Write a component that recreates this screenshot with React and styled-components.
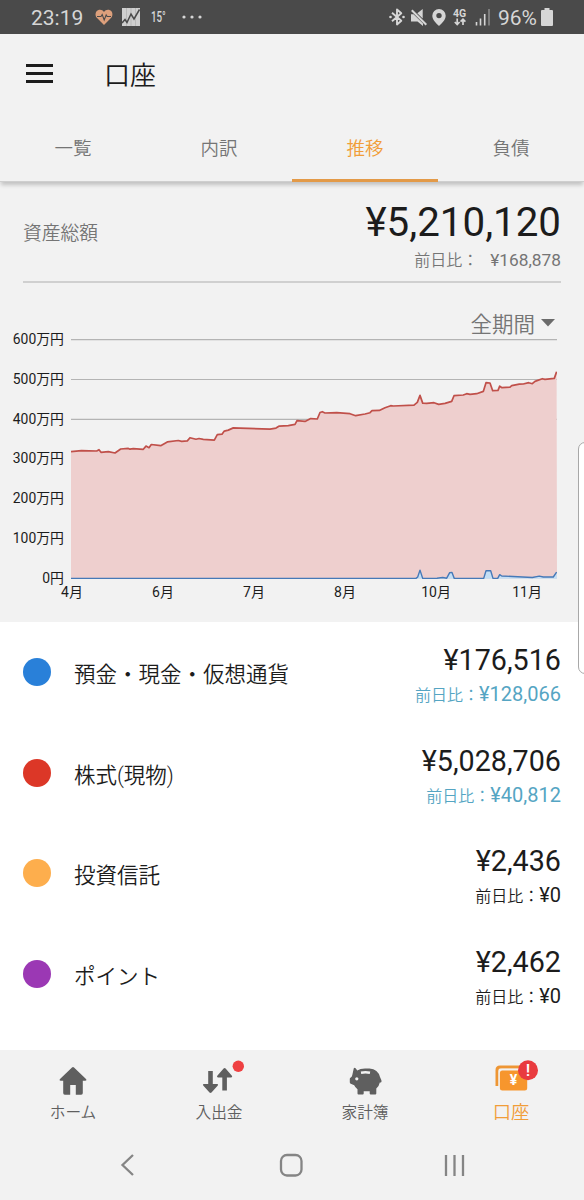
import React from "react";
import styled, { createGlobalStyle } from "styled-components";

const GlobalStyle = createGlobalStyle`
  * {
    box-sizing: border-box;
  }
  body {
    margin: 0;
    background: #f2f2f2;
    color: #1c1c1c;
    font-family: Roboto, "Noto Sans CJK JP", sans-serif;
  }
`;

const Screen = styled.div`
  position: relative;
  display: flex;
  flex-direction: column;
  width: 584px;
  height: 1200px;
  overflow: hidden;
  background: #f2f2f2;
`;

const StatusBar = styled.div`
  display: flex;
  align-items: center;
  justify-content: space-between;
  flex-shrink: 0;
  height: 34px;
  padding: 0 31px;
  background: #4a4a4a;
  color: #d6d6d6;
`;

const StatusGroup = styled.div`
  display: flex;
  align-items: center;
  height: 34px;
`;

const StatusItem = styled.div`
  display: flex;
  margin-left: ${props => props.$gap}px;

  svg {
    display: block;
    overflow: visible;
  }
`;

const StatusText = styled.span`
  font-size: 21px;
  line-height: 34px;
  padding-top: 2px;
`;

const Temperature = styled.span`
  width: 15px;
  margin-left: 11px;
  font-size: 15px;
  font-weight: 500;
  line-height: 34px;
  white-space: nowrap;
  transform: scaleX(0.65);
  transform-origin: left center;
`;

const Header = styled.header`
  display: flex;
  align-items: center;
  flex-shrink: 0;
  height: 80px;
  padding: 0 26px;
`;

const MenuButton = styled.div`
  display: flex;
  flex-direction: column;
  gap: 5px;
  width: 27px;
  margin-top: -1px;

  span {
    height: 3px;
    background: #1c1c1c;
  }
`;

const Title = styled.h1`
  margin: 0 0 0 51px;
  padding-top: 4px;
  font-size: 26px;
  font-weight: 350;
  line-height: 40px;
`;

const Tabs = styled.nav`
  display: grid;
  grid-template-columns: repeat(4, 1fr);
  flex-shrink: 0;
  height: 68px;
  border-bottom: 1px solid #cfcfcf;
  box-shadow: 0 4px 4px -1px rgba(0, 0, 0, 0.2);
`;

const Tab = styled.div`
  height: 68px;
  border-bottom: 3px solid ${props => (props.$active ? "#e39a48" : "transparent")};
  color: ${props => (props.$active ? "#f19d38" : "#757575")};
  font-size: 18.5px;
  font-weight: 350;
  line-height: 70px;
  text-align: center;
`;

const Summary = styled.section`
  display: flex;
  justify-content: space-between;
  flex-shrink: 0;
  height: 101px;
  margin: 0 23px;
  padding-top: 16px;
  border-bottom: 2px solid #d0d0d0;
`;

const SummaryLabel = styled.div`
  color: #757575;
  font-size: 18.8px;
  font-weight: 350;
  line-height: 72px;
`;

const SummaryValues = styled.div`
  display: flex;
  flex-direction: column;
  align-items: flex-end;
`;

const Total = styled.div`
  font-size: 40.3px;
  line-height: 49px;
`;

const DayChange = styled.div`
  display: flex;
  align-items: baseline;
  gap: ${props => props.$gap || 0}px;
  color: ${props => props.$color};
  font-size: 16px;
  font-weight: 350;
  line-height: 26px;

  span {
    font-size: ${props => props.$size}px;
    font-weight: 400;
  }
`;

const ChartSection = styled.section`
  display: flex;
  flex-direction: column;
  flex-shrink: 0;
  height: 339px;
`;

const PeriodSelect = styled.div`
  display: flex;
  align-items: center;
  justify-content: flex-end;
  gap: 6px;
  height: 24px;
  margin-top: 30px;
  padding-right: 29px;
  color: #757575;
  font-size: 21.5px;
  font-weight: 350;
  line-height: 24px;

  svg {
    margin-bottom: 4px;
  }
`;

const ChartBody = styled.div`
  display: flex;
  height: 242px;
`;

const YAxis = styled.div`
  display: flex;
  flex-direction: column;
  width: 71px;
  padding-right: 7px;

  span {
    flex-shrink: 0;
    height: 39.78px;
    font-size: 13.9px;
    line-height: 4px;
    text-align: right;
  }
`;

const Plot = styled.svg`
  display: block;
  width: 486px;
  height: 242px;
`;

const XAxis = styled.div`
  display: flex;
  margin-top: 3px;
  margin-left: 26.5px;

  span {
    width: 91px;
    font-size: 14px;
    line-height: 20px;
    text-align: center;
  }
`;

const AssetList = styled.section`
  flex-shrink: 0;
  height: 428px;
  padding: 0 23px;
  background: #fff;
`;

const AssetRow = styled.div`
  display: flex;
  align-items: flex-start;
  height: 100.6px;
  padding-top: 22px;
`;

const Dot = styled.span`
  width: 28px;
  height: 28px;
  margin: 14px 23px 0 0;
  border-radius: 50%;
  background: ${props => props.$color};
`;

const AssetName = styled.div`
  flex: 1;
  font-size: 21.5px;
  font-weight: 350;
  line-height: 62px;
`;

const AssetValues = styled.div`
  display: flex;
  flex-direction: column;
  align-items: flex-end;
`;

const Amount = styled.div`
  height: 37px;
  font-size: 28.7px;
  line-height: 33px;
`;

const BottomNav = styled.nav`
  display: grid;
  grid-template-columns: repeat(4, 1fr);
  flex-shrink: 0;
  height: 80px;
`;

const NavItem = styled.div`
  display: flex;
  flex-direction: column;
  align-items: center;
  color: ${props => (props.$active ? "#f19d38" : "#5f5f5f")};
  font-size: ${props => (props.$active ? 18.3 : 15.7)}px;
  font-weight: 350;
  line-height: 29px;

  svg {
    display: block;
    margin-top: 10px;
  }
`;

const SystemNav = styled.div`
  display: flex;
  flex-shrink: 0;
  height: 70px;
  padding-top: 22px;
  padding-left: 46px;

  svg {
    display: block;
    width: 163.5px;
    height: 26px;
  }
`;

const EdgeHandle = styled.div`
  position: absolute;
  top: 442px;
  right: -8px;
  width: 14px;
  height: 232px;
  border: 1px solid #a8a8a8;
  border-radius: 8px;
  background: #fff;
`;

const stocks = [
  [0, 112], [10.5, 111], [25.7, 111.3], [28, 110], [30, 112.6], [37.3, 112], [44, 113.3],
  [49.7, 109.3], [57.3, 108.7], [59, 109.5], [62.3, 109], [72.3, 109.6], [75, 106.4],
  [78, 108], [80.3, 104.8], [89.7, 106], [96.3, 102.2], [107.3, 100.8], [110.7, 101.6],
  [116.3, 101.2], [119, 98], [125, 99.6], [128, 98.8], [132.3, 99.6], [143.3, 100.4],
  [146.3, 95], [151, 94.5], [153.3, 91.4], [157.3, 90.4], [162.3, 88.2], [169, 88.4],
  [199, 89.4], [205, 88.4], [208.3, 86.4], [217.3, 86], [224, 84.7], [226, 81],
  [234, 81.7], [239.7, 78.9], [246.3, 79.3], [249, 72.8], [251.3, 72], [254, 73.3],
  [265.7, 73], [279, 74], [284.7, 76], [294, 74.3], [299, 73], [301, 71], [308.3, 70.7],
  [314, 68], [319.7, 66], [322.3, 66.3], [343, 65.4], [346.3, 62.7], [349, 55.7],
  [351.7, 63.4], [355.7, 63.7], [363, 63], [367.7, 64.7], [374, 63.7], [380.7, 61.7],
  [383, 56], [392.3, 55.3], [395.7, 54], [399, 54.7], [405.7, 54], [412.3, 51.7],
  [415, 43], [419, 43.3], [421.7, 51], [427, 50.7], [428.7, 46.4], [431, 48], [439, 47.4],
  [440.7, 46], [448.3, 44.4], [452.3, 44.3], [457.7, 43], [461.3, 44], [464, 41.7],
  [471.3, 39], [474, 39.7], [483.3, 38.7], [485.6, 32]
];

const deposits = [
  [0, 238.7], [345, 238.7], [346.7, 237.3], [349, 230.4], [351.7, 238.7], [366, 238.5],
  [371.7, 237.8], [375.7, 238.5], [378.7, 233], [381, 232.7], [383.3, 238.7],
  [412.7, 238.7], [415, 231], [419.7, 231], [422, 238.7], [426.7, 238.7], [428.7, 235],
  [430.7, 236.3], [461.3, 237.8], [468.3, 236.4], [472.3, 237.3], [482.3, 237.3],
  [485.6, 232.4]
];

const assets = [
  { name: "預金・現金・仮想通貨", color: "#2980d9", amount: "¥176,516", change: "¥128,066", up: true },
  { name: "株式(現物)", color: "#dc3727", amount: "¥5,028,706", change: "¥40,812", up: true },
  { name: "投資信託", color: "#fdae4d", amount: "¥2,436", change: "¥0" },
  { name: "ポイント", color: "#9b38b4", amount: "¥2,462", change: "¥0" }
];

const toLine = points => points.map(p => p.join(",")).join(" ");
const toArea = points => `0,239 ${toLine(points)} 486,239`;

const HeartIcon = () => (
  <svg width="18" height="17" viewBox="0 0 18 17">
    <path d="M9 16 1.8 8.8C-.3 6.500.3 2.400 3 1.200 5.300.1 7.700 1 9 3c1.300-2 3.700-2.900 6-1.800 2.700 1.200 3.300 5.300 1.200 7.600Z" fill="#dda07c" />
    <path d="M2 7.500h4l1.200-2 2 5.500 2-5 1 1.500H16" fill="none" stroke="#4a4a4a" strokeWidth="1.100" />
  </svg>
);

const StocksIcon = () => (
  <svg width="18" height="18" viewBox="0 0 18 18">
    <path d="M0 0h18v18H0Z" fill="#cfcfcf" />
    <path d="M4.500 0v18M9 0v18M13.500 0v18" stroke="#aaa" strokeWidth=".6" />
    <path d="m0 15 3-3.500 2 3L9 6l3 5 5.500-9.500" fill="none" stroke="#4a4a4a" strokeWidth="1.500" />
  </svg>
);

const DotsIcon = () => (
  <svg width="20" height="4" viewBox="0 0 20 4" fill="#d6d6d6">
    <circle cx="2" cy="2" r="1.600" />
    <circle cx="10" cy="2" r="1.600" />
    <circle cx="18" cy="2" r="1.600" />
  </svg>
);

const BluetoothIcon = () => (
  <svg width="16" height="18" viewBox="0 0 16 18">
    <path d="m3 4.800 9.300 8-4.300 3.700v-15L12.300 5.200 3 13.200" fill="none" stroke="#d6d6d6" strokeWidth="1.900" strokeLinejoin="round" />
    <circle cx="1.500" cy="9" r="1.300" fill="#d6d6d6" />
    <circle cx="14.500" cy="9" r="1.300" fill="#d6d6d6" />
  </svg>
);

const MuteIcon = () => (
  <svg width="16" height="17" viewBox="0 0 16 17">
    <path d="M0 5.200h2.500L12 14.500V17L6.500 12.500H0ZM6.300 4.300 11.700 0v9.500Z" fill="#d6d6d6" />
    <path d="m.8 1.200 14.500 14.500" stroke="#d6d6d6" strokeWidth="2" />
  </svg>
);

const LocationIcon = () => (
  <svg width="14" height="17" viewBox="0 0 14 17">
    <path fillRule="evenodd" d="M7 0a6.700 6.700 0 0 1 6.700 6.700C13.700 11 9.500 14.500 7 17 4.500 14.500.3 11 .3 6.700A6.700 6.700 0 0 1 7 0Zm0 3.900a2.700 2.700 0 1 0 0 5.400 2.700 2.700 0 0 0 0-5.400Z" fill="#d6d6d6" />
  </svg>
);

const NetworkIcon = () => (
  <svg width="14" height="18" viewBox="0 0 14 18">
    <text x="0" y="8.500" fontSize="10.500" fontWeight="700" fill="#d6d6d6">4G</text>
    <path d="M4.200 10.500V16M1.800 14l2.400 2.500L6.600 14M10 17v-5.500M7.600 13.700 10 11.200l2.400 2.500" fill="none" stroke="#d6d6d6" strokeWidth="1.700" />
  </svg>
);

const SignalIcon = () => (
  <svg width="16" height="17" viewBox="0 0 16 17">
    <path d="M1.500 13v3.500M5.500 9.500v7M9.700 5v11.500" stroke="#d6d6d6" strokeWidth="1.600" />
    <path d="M14 0v16.500" stroke="#7d7d7d" strokeWidth="2" />
  </svg>
);

const BatteryIcon = () => (
  <svg width="12" height="18" viewBox="0 0 12 18">
    <path d="M3.500 0h5v2H11q1 0 1 1v14q0 1-1 1H1q-1 0-1-1V3q0-1 1-1h2.500Z" fill="#d6d6d6" />
  </svg>
);

const HomeIcon = () => (
  <svg width="60" height="38" viewBox="0 0 60 38">
    <path d="M29 7.500q1-.9 2 0L43 19q1.200 1.600-.8 1.800h-2.400V33q0 1.700-1.600 1.700h-5.400V25h-5.600v9.700h-5.400q-1.600 0-1.600-1.700V20.800h-2.400q-2-.2-.8-1.800Z" fill="#5f5f5f" />
  </svg>
);

const TransferIcon = () => (
  <svg width="60" height="38" viewBox="0 0 60 38">
    <path d="M19.200 11h4.600v13h4.400q1.500.3.600 1.600l-6.300 7q-1 .9-2 0l-6.300-7q-.9-1.300.6-1.600h4.400ZM33.300 30.600h4.600V17.400h4.400q1.500-.3.600-1.600L36.600 8.400q-1-.9-2 0l-6.300 7.400q-.9 1.300.6 1.600h4.400Z" fill="#5f5f5f" />
    <circle cx="49.300" cy="6.300" r="5.700" fill="#ef4042" />
  </svg>
);

const PiggyIcon = () => (
  <svg width="60" height="38" viewBox="0 0 60 38">
    <path d="M18.800 8.200q.8-1 1.800 0l1.700 2.200Q25 8.600 30 8.400h4.500q8.500.6 10.500 8.600l1.400 3.300q.5 1.600-.4 2.200h-1.200q-.9 4.300-3.500 6v5.100q0 1-1 1h-4.600q-1 0-1-1v-2.300h-6v2.300q0 1-1 1h-4.200q-1 0-1-1v-4.300q-2.300-1.700-3.300-4l-3.400-1.500q-1-.6-1-1.600v-3.400q.1-1 1-1.300 1.300-.8 1.500-2.600Z" fill="#5f5f5f" />
    <path d="M26 12.800q4.500-.9 9 0" fill="none" stroke="#f2f2f2" strokeWidth="2.500" />
    <circle cx="21.800" cy="18.800" r="1.600" fill="#f2f2f2" />
  </svg>
);

const WalletIcon = () => (
  <svg width="60" height="38" viewBox="0 0 60 38">
    <path d="M16 26V10q0-3 3-3h24" fill="none" stroke="#ee9634" strokeWidth="3" />
    <rect x="17.500" y="8.700" width="29" height="22" rx="3" fill="#f2f2f2" />
    <rect x="18.900" y="10.400" width="27.300" height="20" rx="2.500" fill="#f7962d" />
    <text x="32.400" y="25" fontSize="14" fontWeight="700" textAnchor="middle" fill="#fff">¥</text>
    <circle cx="47" cy="10.300" r="10" fill="#e93b3f" />
    <text x="47" y="16.200" fontSize="17" fontWeight="500" textAnchor="middle" fill="#fff">!</text>
  </svg>
);

const Chart = () => (
  <Plot viewBox="0 -2.7 486 242">
    {[0, 39.8, 79.6].map(y => (
      <line key={y} x1="0" x2="486" y1={y} y2={y} stroke="#b4b4b4" strokeWidth="1.200" />
    ))}
    <polygon points={toArea(stocks)} fill="#eecfce" />
    <polyline points={toLine(stocks)} fill="none" stroke="#c0504a" strokeWidth="1.700" strokeLinejoin="round" />
    <polygon points={toArea(deposits)} fill="#c5dff5" />
    <polyline points={toLine(deposits)} fill="none" stroke="#4579b8" strokeWidth="1.400" strokeLinejoin="round" />
  </Plot>
);

const App = () => (
  <Screen lang="ja">
    <GlobalStyle />
    <StatusBar>
      <StatusGroup>
        <StatusText>23:19</StatusText>
        <StatusItem $gap={12}><HeartIcon /></StatusItem>
        <StatusItem $gap={9}><StocksIcon /></StatusItem>
        <Temperature>15°</Temperature>
        <StatusItem $gap={16}><DotsIcon /></StatusItem>
      </StatusGroup>
      <StatusGroup>
        <StatusItem $gap={0}><BluetoothIcon /></StatusItem>
        <StatusItem $gap={6}><MuteIcon /></StatusItem>
        <StatusItem $gap={5}><LocationIcon /></StatusItem>
        <StatusItem $gap={7}><NetworkIcon /></StatusItem>
        <StatusItem $gap={8}><SignalIcon /></StatusItem>
        <StatusItem $gap={7}><StatusText>96%</StatusText></StatusItem>
        <StatusItem $gap={4}><BatteryIcon /></StatusItem>
      </StatusGroup>
    </StatusBar>

    <Header>
      <MenuButton>
        <span />
        <span />
        <span />
      </MenuButton>
      <Title>口座</Title>
    </Header>

    <Tabs>
      {["一覧", "内訳", "推移", "負債"].map(tab => (
        <Tab key={tab} $active={tab === "推移"}>{tab}</Tab>
      ))}
    </Tabs>

    <Summary>
      <SummaryLabel>資産総額</SummaryLabel>
      <SummaryValues>
        <Total>¥5,210,120</Total>
        <DayChange $color="#757575" $size={17.3} $gap={12}>
          前日比：<span>¥168,878</span>
        </DayChange>
      </SummaryValues>
    </Summary>

    <ChartSection>
      <PeriodSelect>
        全期間
        <svg width="14" height="8" viewBox="0 0 14 8">
          <path d="M0 0h14L7 7.500Z" fill="#6b6b6b" />
        </svg>
      </PeriodSelect>
      <ChartBody>
        <YAxis>
          {[600, 500, 400, 300, 200, 100, 0].map(value => (
            <span key={value}>{value ? `${value}万円` : "0円"}</span>
          ))}
        </YAxis>
        <Chart />
      </ChartBody>
      <XAxis>
        {[4, 6, 7, 8, 10, 11].map(month => (
          <span key={month}>{month}月</span>
        ))}
      </XAxis>
    </ChartSection>

    <AssetList>
      {assets.map(asset => (
        <AssetRow key={asset.name}>
          <Dot $color={asset.color} />
          <AssetName>{asset.name}</AssetName>
          <AssetValues>
            <Amount>{asset.amount}</Amount>
            <DayChange $color={asset.up ? "#55a5c3" : "#1c1c1c"} $size={20}>
              前日比：<span>{asset.change}</span>
            </DayChange>
          </AssetValues>
        </AssetRow>
      ))}
    </AssetList>

    <BottomNav>
      <NavItem><HomeIcon />ホーム</NavItem>
      <NavItem><TransferIcon />入出金</NavItem>
      <NavItem><PiggyIcon />家計簿</NavItem>
      <NavItem $active><WalletIcon />口座</NavItem>
    </BottomNav>

    <SystemNav>
      <svg viewBox="0 0 163.5 26" fill="none" stroke="#858585" strokeWidth="2.300">
        <path d="m87 3-10.500 10L87 23" />
      </svg>
      <svg viewBox="0 0 163.5 26" fill="none" stroke="#858585" strokeWidth="2.300">
        <rect x="71" y="3" width="20.500" height="20.500" rx="6" />
      </svg>
      <svg viewBox="0 0 163.5 26" fill="none" stroke="#858585" strokeWidth="2.300">
        <path d="M73 3v21M81.500 3v21M90 3v21" />
      </svg>
    </SystemNav>

    <EdgeHandle />
  </Screen>
);

export default App;
